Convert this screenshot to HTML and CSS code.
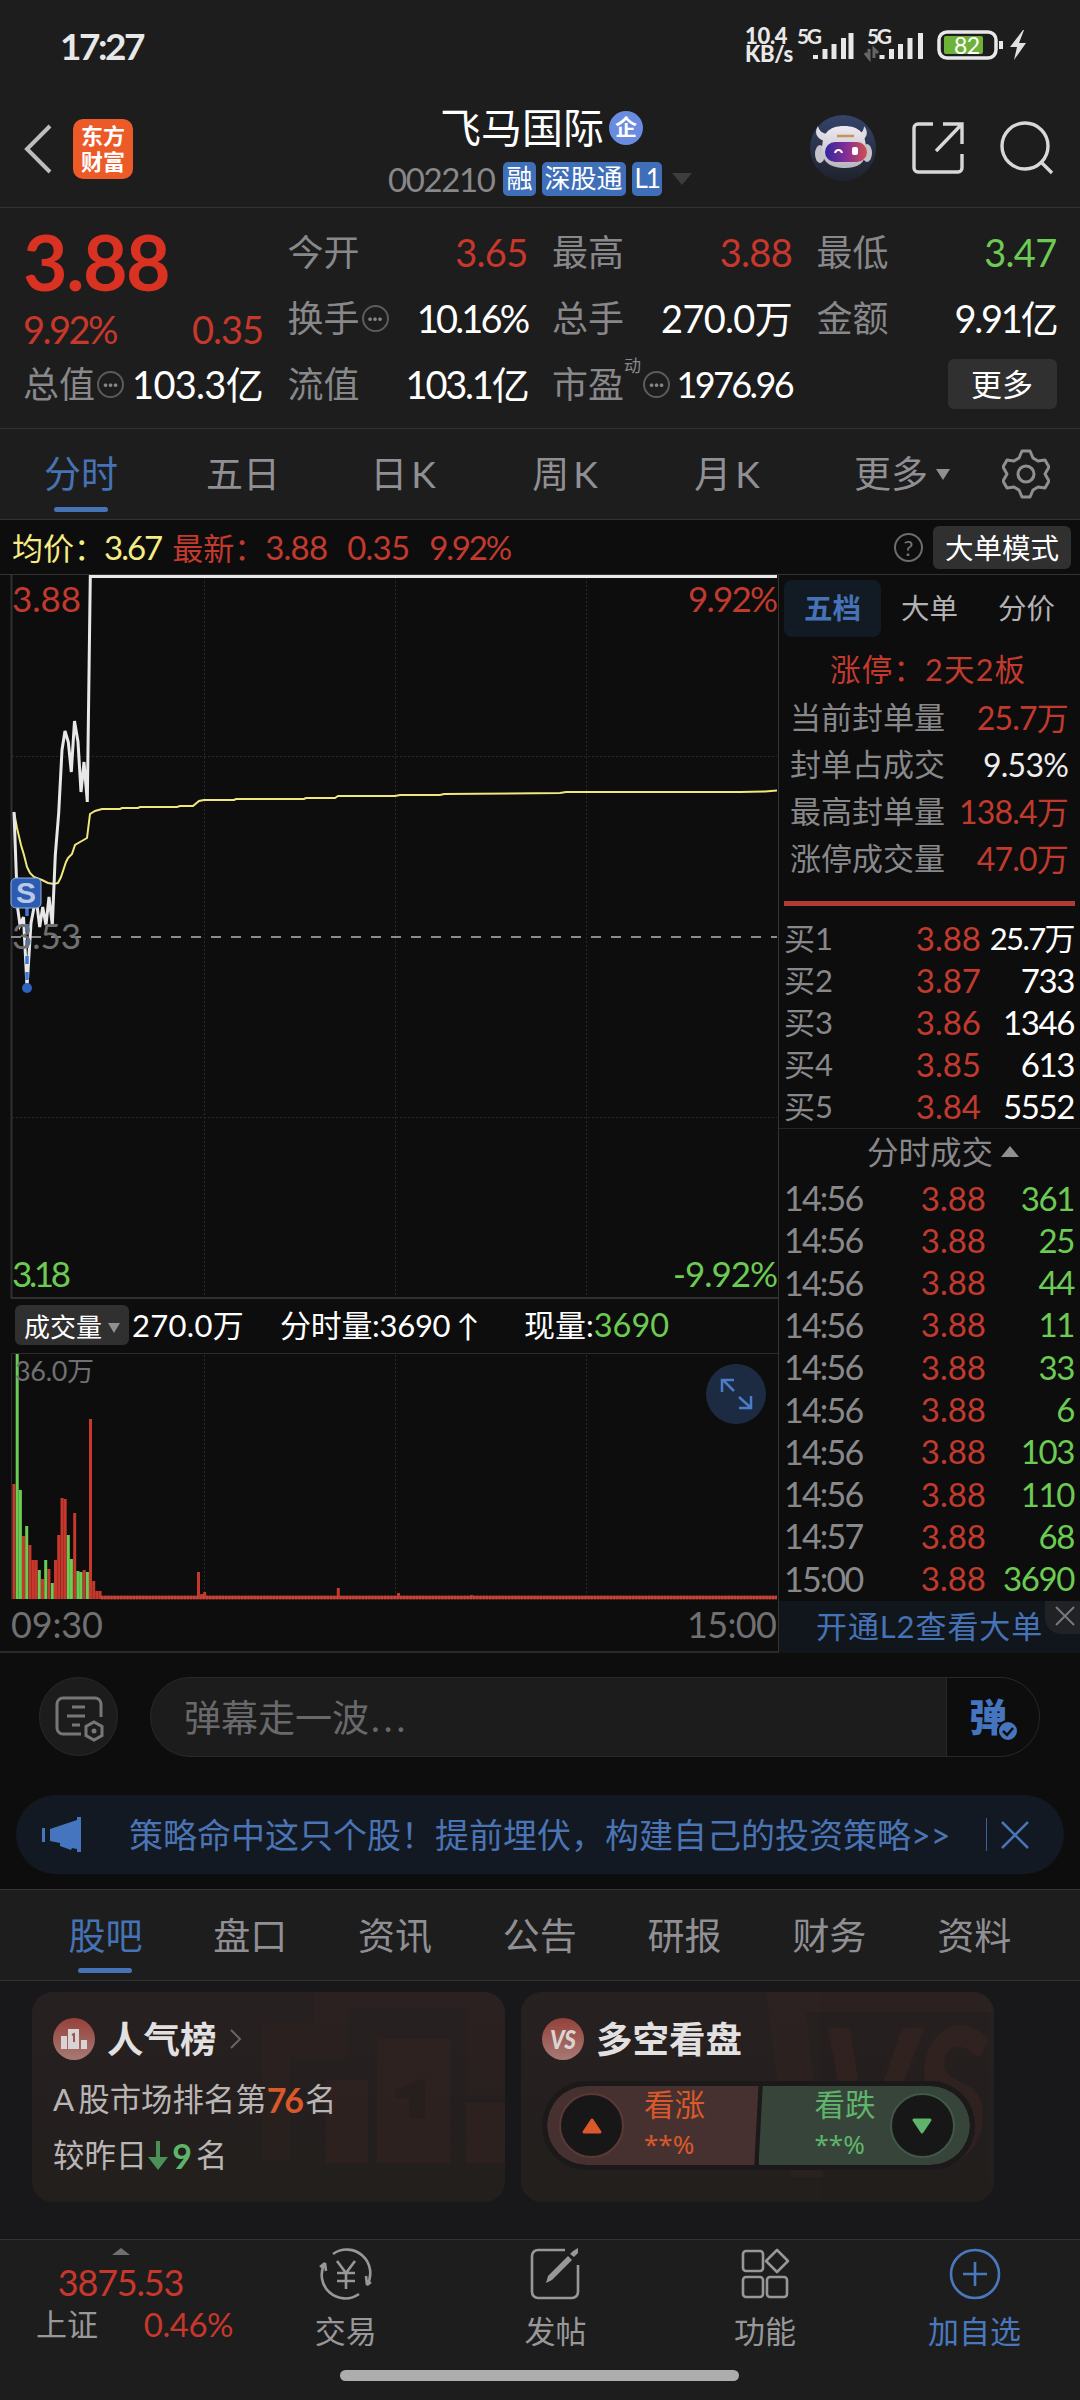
FILE: index.html
```html
<!DOCTYPE html>
<html lang="zh-CN">

<head>
    <meta charset="UTF-8">
    <meta name="viewport" content="width=device-width, initial-scale=1.0">
    <title>飞马国际 002210</title>
    <link rel="stylesheet" href="styles.css">
</head>

<body>
    <div class="status">
        <div class="clock">17:27</div>
        <div class="status-right">
            <div class="speed">10.4<br>KB/s</div>
            <svg class="signals" width="130" height="48" viewBox="0 0 130 48">
                <g class="sig-text"><text x="0" y="22" textLength="25">5G</text><text x="70" y="22" textLength="25">5G</text></g>
                <path class="sig-bars" d="M18.500 37V33M28 37V27M37 37V22M46.500 37V16M54 37V11M85 37V33M94.500 37V27M103.500 37V22M113 37V16M123.500 37V11" />
                <path d="M72 27v9l-4-5M77 36v-9l4 4" fill="none" stroke="#666" stroke-width="3" />
            </svg>
            <svg width="96" height="32" viewBox="0 0 96 32">
                <rect x="2" y="2" width="57" height="26" rx="8" fill="none" stroke="#e8e8e8" stroke-width="3.500" />
                <rect x="7" y="6" width="39" height="18" rx="2" fill="#6db33a" />
                <path d="M64 11v8" stroke="#e8e8e8" stroke-width="4" />
                <text x="17" y="24" class="battery-text" textLength="26">82</text>
                <path d="M86 0L73 17h7l-3 13 12-17h-7l5-13z" fill="#e0e0e0" />
            </svg>
        </div>
    </div>

    <header class="header">
        <div class="header-left">
            <svg width="28" height="50" viewBox="0 0 28 50"><path d="M26 2L3 25l23 23" fill="none" stroke="#bdbdbd" stroke-width="4" /></svg>
            <div class="logo">东方<br>财富</div>
        </div>
        <div class="header-title">
            <div class="name">飞马国际<span class="badge">企</span></div>
            <div class="code"><span class="num">002210</span><span class="tag">融</span><span class="tag">深股通</span><span class="tag level">L1</span><i class="down"></i></div>
        </div>
        <div class="header-right">
            <svg width="66" height="66" viewBox="0 0 66 66">
                <defs>
                    <linearGradient id="sky" x1="0" y1="0" x2="0" y2="1"><stop offset="0" stop-color="#35436a" /><stop offset="1" stop-color="#1f222b" /></linearGradient>
                    <linearGradient id="visor"><stop offset="0" stop-color="#3026a0" /><stop offset=".55" stop-color="#8b3093" /><stop offset="1" stop-color="#d0504c" /></linearGradient>
                    <linearGradient id="shell" x1="0" y1="0" x2="0" y2="1"><stop offset="0" stop-color="#eceaf0" /><stop offset="1" stop-color="#b9b5bd" /></linearGradient>
                </defs>
                <circle cx="33" cy="33" r="33" fill="url(#sky)" />
                <path d="M8 11c-4 6-2 12 6 15l5-7c-6 0-10-3-11-8zM54 11c5 6 3 12-3 15l-5-7c5 0 8-3 8-8z" fill="#dddbe2" />
                <ellipse cx="10" cy="39" rx="5" ry="9" fill="#c5c2c9" /><ellipse cx="57" cy="38" rx="5" ry="9" fill="#c5c2c9" />
                <path d="M12 35c0-16 6-24 22-24s22 8 22 24c0 13-8 18-21 18s-23-5-23-18z" fill="url(#shell)" />
                <rect x="15" y="27" width="42" height="20" rx="10" fill="url(#visor)" />
                <path d="M25 38c1-4 6-4 7 0" fill="none" stroke="#fff" stroke-width="2" /><rect x="42" y="32" width="6" height="8" rx="2" fill="#fff" />
                <path d="M27 21h17" stroke="#c7925f" stroke-width="2.500" />
            </svg>
            <svg width="52" height="52" viewBox="0 0 52 52"><path d="M21 2H6a4 4 0 0 0-4 4v40a4 4 0 0 0 4 4h40a4 4 0 0 0 4-4V32M31 2h19v20M49 3L24 29" fill="none" stroke="#d8d8d8" stroke-width="3.400" /></svg>
            <svg width="54" height="54" viewBox="0 0 54 54"><g fill="none" stroke="#d8d8d8" stroke-width="3.400"><circle cx="25" cy="25" r="23" /><path d="M41 41l11 11" /></g></svg>
        </div>
    </header>

    <section class="quote">
        <div class="col">
            <div class="price up">3.88</div>
            <div class="change up"><span class="tight">9.92%</span><span>0.35</span></div>
            <div class="row"><label>总值<i class="dots">···</i></label><b>103.3亿</b></div>
        </div>
        <div class="col">
            <div class="row"><label>今开</label><b class="up">3.65</b></div>
            <div class="row"><label>换手<i class="dots">···</i></label><b class="tighter">10.16%</b></div>
            <div class="row"><label>流值</label><b class="tight">103.1亿</b></div>
        </div>
        <div class="col">
            <div class="row"><label>最高</label><b class="up">3.88</b></div>
            <div class="row"><label>总手</label><b>270.0万</b></div>
            <div class="row"><label>市盈<sup>动</sup><i class="dots">···</i></label><b class="small">1976.96</b></div>
        </div>
        <div class="col">
            <div class="row"><label>最低</label><b class="down-color">3.47</b></div>
            <div class="row"><label>金额</label><b class="tight">9.91亿</b></div>
            <div class="row"><button class="more">更多</button></div>
        </div>
    </section>

    <nav class="period">
        <span class="active">分时</span><span>五日</span><span class="k">日K</span><span class="k">周K</span><span class="k">月K</span><span class="wide">更多<i class="down"></i></span>
        <svg width="48" height="50" viewBox="0 0 48 50"><g fill="none" stroke="#909094" stroke-width="3"><path d="M20 2h8l3 7 5 3 7-1 4 7-4 7 4 7-4 7-7-1-5 3-3 7h-8l-3-7-5-3-7 1-4-7 4-7-4-7 4-7 7 1 5-3z" stroke-linejoin="round" /><circle cx="24" cy="25" r="8" /></g></svg>
    </nav>

    <div class="legend">
        <span class="avg">均价：<em>3.67</em></span>
        <span class="last">最新：<em>3.88</em><em>0.35</em><em class="tight">9.92%</em></span>
        <i class="help">?</i>
        <button class="mode">大单模式</button>
    </div>

    <main class="main">
        <div class="charts">
            <svg class="chart" width="778" height="725" viewBox="0 574 778 725">
                <path class="solid" d="M11.500 575V1298H778" />
                <path class="dot" d="M204.500 577V1297M395.500 577V1297M586.500 577V1297M12 756.500H777M12 1117.500H777" />
                <path d="M11 937H777" stroke="#8b8b8b" stroke-width="2" stroke-dasharray="10 10" />
                <polyline class="avg-line" points="14,812 17,828 21,845 24,855 27,867 30,873 34,877 42,880 48,883 54,884 58,883 61,877 66,862 68,858 72,854 75,845 80,842 87,838 90,814 95,811 102,809 120,809 122,808 138,808 140,807 177,807 180,806 193,806 199,801 204,800 234,800 236,799 304,799 306,798 335,798 338,796 395,796 400,795 440,795 444,794 560,793 566,792 740,792 765,791.500 777,790.500" />
                <polyline class="price-line" points="14,812 17.500,907 20,925 23.500,917 27,987 31,923 36,897 39.700,927 42.700,907 46,925 49,897 52.300,925 55.300,855 58.700,813 62,750 65,731 68.300,742 71.300,772 74.500,721 78,742 81,792 84,762 87.300,802 90.300,576.500 777,576.500" />
                <path d="M27 908V988" stroke="#3f76dc" stroke-width="3.500" stroke-dasharray="8 8" />
                <circle cx="27" cy="988" r="5" fill="#2e62bd" />
                <rect x="11" y="878" width="30" height="30" rx="5" fill="#2b5cb2" stroke="#92aede" />
                <text x="16" y="903" class="sell">S</text>
                <g class="scale">
                    <text x="12" y="612" fill="#c23a2d">3.88</text>
                    <text x="778" y="612" fill="#c23a2d" text-anchor="end" textLength="90">9.92%</text>
                    <text x="12" y="949" fill="#707072">3.53</text>
                    <text x="12" y="1287" fill="#6ccb52" textLength="59">3.18</text>
                    <text x="778" y="1287" fill="#6ccb52" text-anchor="end" textLength="105">-9.92%</text>
                </g>
            </svg>
            <div class="vol-head">
                <button class="vol-btn">成交量<i class="down"></i></button>
                <span class="v1">270.0万</span>
                <span class="v2">分时量:3690<em>↑</em></span>
                <span class="v3">现量:<em>3690</em></span>
            </div>
            <svg class="volume" width="778" height="298" viewBox="0 1353 778 298">
                <path d="M11.500 1599V1353.500H778" fill="none" stroke="#2c2c2c" />
                <path d="M204.500 1355V1597M395.500 1355V1597M586.500 1355V1597" stroke="#292929" stroke-dasharray="2 2" />
                <path class="bars-up" d="M13.900 1599V1484M23.500 1599V1536M29.900 1599V1545M33.100 1599V1560M36.200 1599V1560M42.500 1599V1579M48.900 1599V1569M55.500 1599V1560M58.700 1599V1535M62 1599V1498M65.200 1599V1499M74.700 1599V1513M84.200 1599V1570M90.500 1599V1419M93.700 1599V1581M96.900 1599V1591M100.100 1599V1591M198.500 1599V1572M201.700 1599V1594M204.700 1599V1592M338.300 1599V1588M398.500 1599V1593M471.600 1599V1595" />
                <path class="bars-down" d="M17.200 1599V1354M20.400 1599V1490M26.700 1599V1526M39.300 1599V1570M45.700 1599V1560M52.300 1599V1583M68.300 1599V1535M71.400 1599V1559M77.900 1599V1571M81 1599V1572M87.400 1599V1572" />
                <path d="M101 1597.500H777" stroke="#a83a30" stroke-width="3.500" />
                <path d="M101 1597.500H777" stroke="#c8453a" stroke-width="3.500" stroke-dasharray="2.200 .98" />
                <g fill="#707072">
                    <text x="15" y="1381" class="vol-max" textLength="79">36.0万</text>
                    <text x="11" y="1638" class="time-label" textLength="92">09:30</text>
                    <text x="687" y="1638" class="time-label" textLength="90">15:00</text>
                </g>
                <circle cx="736" cy="1394" r="30" fill="#1d2b42" />
                <path d="M734 1391l-11-11M722 1392v-12h12M739 1397l11 10M739 1408h12v-12" fill="none" stroke="#4a7cc8" stroke-width="2.500" />
            </svg>
        </div>

        <aside class="side">
            <div class="side-tabs"><span class="on">五档</span><span>大单</span><span>分价</span></div>
            <div class="limit">涨停：2天2板</div>
            <div class="info"><span>当前封单量</span><b class="up">25.7万</b></div>
            <div class="info"><span>封单占成交</span><b>9.53%</b></div>
            <div class="info"><span>最高封单量</span><b class="up">138.4万</b></div>
            <div class="info"><span>涨停成交量</span><b class="up">47.0万</b></div>
            <div class="bid-line"></div>
            <div class="bid"><span>买1</span><b>3.88</b><i class="wan">25.7万</i></div>
            <div class="bid"><span>买2</span><b>3.87</b><i>733</i></div>
            <div class="bid"><span>买3</span><b>3.86</b><i>1346</i></div>
            <div class="bid"><span>买4</span><b>3.85</b><i>613</i></div>
            <div class="bid"><span>买5</span><b>3.84</b><i>5552</i></div>
            <div class="deal-title">分时成交<i class="tri-up"></i></div>
            <div class="bid deal"><span>14:56</span><b>3.88</b><i>361</i></div>
            <div class="bid deal"><span>14:56</span><b>3.88</b><i>25</i></div>
            <div class="bid deal"><span>14:56</span><b>3.88</b><i>44</i></div>
            <div class="bid deal"><span>14:56</span><b>3.88</b><i>11</i></div>
            <div class="bid deal"><span>14:56</span><b>3.88</b><i>33</i></div>
            <div class="bid deal"><span>14:56</span><b>3.88</b><i>6</i></div>
            <div class="bid deal"><span>14:56</span><b>3.88</b><i>103</i></div>
            <div class="bid deal"><span>14:56</span><b>3.88</b><i>110</i></div>
            <div class="bid deal"><span>14:57</span><b>3.88</b><i>68</i></div>
            <div class="bid deal"><span>15:00</span><b>3.88</b><i>3690</i></div>
            <div class="level2">开通L2查看大单
                <span class="l2-close"><svg width="20" height="20" viewBox="0 0 20 20"><path d="M1 1l18 18M19 1L1 19" stroke="#77797e" stroke-width="2" /></svg></span>
            </div>
        </aside>
    </main>

    <div class="danmu">
        <div class="danmu-set">
            <svg width="50" height="46" viewBox="0 0 50 46"><g fill="none" stroke="#77777a" stroke-width="3"><path d="M26 38H8a6 6 0 0 1-6-6V8a6 6 0 0 1 6-6h32a6 6 0 0 1 6 6v13M17 11h13M12 20h18M17 29h8" /><path d="M39 26l8 4.500v9L39 44l-8-4.500v-9z" /></g><circle cx="39" cy="35" r="2.500" fill="#77777a" /></svg>
        </div>
        <div class="danmu-input">
            <span>弹幕走一波<em>...</em></span>
            <div class="danmu-toggle">弹<svg width="22" height="22" viewBox="0 0 22 22"><circle cx="11" cy="11" r="10" fill="#4575be" stroke="#0d0d0d" stroke-width="2" /><path d="M6 11l4 4 6-7" fill="none" stroke="#0d0d0d" stroke-width="2.500" /></svg></div>
        </div>
    </div>

    <div class="notice">
        <svg width="40" height="36" viewBox="0 0 40 36"><path d="M0 11h3v14H0zM8 12L35 3V0h4v35h-4v-3l-5-1-1 2-11-4v-3L8 24z" fill="#4575be" /></svg>
        <span>策略命中这只个股！提前埋伏，构建自己的投资策略&gt;&gt;</span>
        <svg class="notice-close" width="30" height="30" viewBox="0 0 30 30"><path d="M2 2l26 26M28 2L2 28" stroke="#4a74b4" stroke-width="2.500" /></svg>
    </div>

    <nav class="sections">
        <span class="active">股吧</span><span>盘口</span><span>资讯</span><span>公告</span><span>研报</span><span>财务</span><span>资料</span>
    </nav>

    <div class="cards">
        <div class="card">
            <svg class="mark" width="473" height="210" viewBox="0 0 473 210"><path d="M230 168V33h52V0h191v103h-38V15H315v50h-57v103z" fill="#352522" opacity=".3" /><path d="M294 171V88h42v83zM345 171V47h73v124zM434 171v-60h39v60z" fill="#4d2a25" opacity=".22" /><path d="M363 98l30-12v41h-16v-21h-14z" fill="#271f1e" /></svg>
            <div class="card-title">
                <svg width="42" height="42" viewBox="0 0 42 42"><defs><linearGradient id="red" x1="0" y1="0" x2="0" y2="1"><stop offset="0" stop-color="#954139" /><stop offset="1" stop-color="#a77975" /></linearGradient></defs><circle cx="21" cy="21" r="21" fill="url(#red)" /><path d="M8 18h6v13H8zM15 11h11v20H15zM28 22h6v9h-6z" fill="#d9d4d3" /><path d="M19 17l2-1v8" fill="none" stroke="#9b5650" stroke-width="2" /></svg>
                <h3>人气榜</h3>
                <svg class="arrow" width="12" height="20" viewBox="0 0 12 20"><path d="M1 1l9 9-9 9" fill="none" stroke="#6b6665" stroke-width="2" /></svg>
            </div>
            <p><em>A</em>股市场排名第<strong>76</strong>名</p>
            <p class="second">较昨日<svg width="22" height="30" viewBox="0 0 22 30"><path d="M11 0v20" stroke="#4c8f57" stroke-width="4" /><path d="M1 16h20L11 29z" fill="#4c8f57" /></svg><strong class="green">9</strong>名</p>
        </div>
        <div class="card">
            <svg class="mark" width="473" height="210" viewBox="0 0 473 210"><path d="M245 0h228v20H285l18 165h-34z" fill="#352522" opacity=".4" /><text x="300" y="170" class="mark-text" textLength="168" lengthAdjust="spacingAndGlyphs">VS</text></svg>
            <div class="card-title">
                <svg width="42" height="42" viewBox="0 0 42 42"><circle cx="21" cy="21" r="21" fill="url(#red)" /><text x="8" y="31" class="vs" textLength="26" lengthAdjust="spacingAndGlyphs">VS</text></svg>
                <h3>多空看盘</h3>
            </div>
            <div class="vote">
                <div class="bull"><i><svg width="20" height="16" viewBox="0 0 20 16"><path d="M10 2l8 12H2z" fill="#d9592b" stroke="#d9592b" stroke-width="3" stroke-linejoin="round" /></svg></i><span>看涨<br><small>**%</small></span></div>
                <div class="bear"><span>看跌<br><small>**%</small></span><i><svg width="20" height="16" viewBox="0 0 20 16"><path d="M2 2h16l-8 12z" fill="#5fb46b" stroke="#5fb46b" stroke-width="3" stroke-linejoin="round" /></svg></i></div>
            </div>
        </div>
    </div>

    <footer class="bottom">
        <div class="index">
            <i class="tri-up"></i>
            <div class="index-value">3875.53</div>
            <div class="index-row"><span>上证</span><b>0.46%</b></div>
        </div>
        <div class="item">
            <svg width="60" height="54" viewBox="0 0 60 54"><g fill="none" stroke="#98989a" stroke-width="2.600"><path d="M17 7a23.500 23.500 0 0 1 34 31l4-3M51 38l-1-9M43 47A23.500 23.500 0 0 1 9 16l-5 4M9 16l1 8" /><path d="M21 14l9 12 9-12M30 26v16M21 26h18M21 34h18" /></g></svg>
            <span>交易</span>
        </div>
        <div class="item">
            <svg width="50" height="54" viewBox="0 0 50 54"><path d="M35 3H8a6 6 0 0 0-6 6v36a6 6 0 0 0 6 6h34a6 6 0 0 0 6-6V18" fill="none" stroke="#98989a" stroke-width="2.600" /><path d="M43 4l5-3v5l-4 4-4-3zM38 9l4 4-20 20-6 3 2-7z" fill="#98989a" /></svg>
            <span>发帖</span>
        </div>
        <div class="item">
            <svg width="50" height="54" viewBox="0 0 50 54"><g fill="none" stroke="#98989a" stroke-width="2.600"><rect x="3" y="4" width="20" height="20" rx="3" /><rect x="3" y="30" width="20" height="20" rx="3" /><rect x="27" y="30" width="20" height="20" rx="3" /><path d="M37 3l11 11-11 11-11-11z" stroke-linejoin="round" /></g></svg>
            <span>功能</span>
        </div>
        <div class="item blue">
            <svg width="54" height="54" viewBox="0 0 54 54"><g fill="none" stroke="#4a78bd" stroke-width="2.600"><circle cx="27" cy="27" r="24" /><path d="M27 15v24M15 27h24" /></g></svg>
            <span>加自选</span>
        </div>
        <div class="home-bar"></div>
    </footer>
</body>

</html>
```

FILE: styles.css
```css
* {
    box-sizing: border-box;
}

body {
    margin: 0;
    width: 1080px;
    height: 2400px;
    overflow: hidden;
    background-color: #0d0d0d;
    color: #fff;
    font-family: Lato, "Noto Sans CJK SC", sans-serif;
    line-height: 1;
    display: flex;
    flex-direction: column;
}

svg {
    display: block;
    flex: none;
}

i,
em {
    font-style: normal;
}

b {
    font-weight: 400;
}

button {
    border: none;
    padding: 0;
    font-family: inherit;
    color: #fff;
    background-color: #303030;
    border-radius: 6px;
    white-space: nowrap;
}

.up {
    color: #c8372b;
}

.down-color {
    color: #6ccb52;
}

.down {
    display: inline-block;
    border: 7px solid transparent;
    border-top: 11px solid #909094;
    border-bottom: none;
}

.tri-up {
    display: inline-block;
    border: 9px solid transparent;
    border-bottom: 11px solid #909094;
    border-top: none;
}

/* status bar */
.status {
    height: 92px;
    background-color: #1d1d1d;
    display: flex;
    justify-content: space-between;
    align-items: center;
    padding: 0 47px 0 60px;
    color: #e8e8e8;
}

.clock {
    font-size: 37px;
    font-weight: 700;
    letter-spacing: -2.5px;
    padding-bottom: 2px;
}

.status-right {
    display: flex;
    align-items: center;
}

.speed {
    width: 52px;
    font-size: 22px;
    line-height: 18px;
    padding-bottom: 3px;
    font-weight: 900;
    letter-spacing: -0.3px;
}

.signals {
    margin-right: 10px;
}

.sig-text {
    font-size: 21px;
    font-weight: 700;
    fill: #e8e8e8;
}

.sig-bars {
    stroke: #e8e8e8;
    stroke-width: 5;
}

.battery-text {
    font-size: 23px;
    fill: #fff;
}

/* header */
.header {
    height: 116px;
    background-color: #1d1d1d;
    border-bottom: 1px solid #333;
    display: flex;
    justify-content: space-between;
}

.header-left,
.header-right {
    width: 300px;
    display: flex;
    align-items: center;
    padding: 0 0 2px 24px;
}

.header-right {
    padding: 0 26px 3px 0;
    justify-content: flex-end;
}

.header-right svg {
    margin-left: 36px;
}

.logo {
    width: 60px;
    height: 60px;
    margin-left: 21px;
    border-radius: 10px;
    background-color: #ec5a28;
    font-size: 22px;
    line-height: 26px;
    padding-top: 4px;
    text-align: center;
    font-weight: 700;
}

.header-title {
    width: 440px;
    display: flex;
    flex-direction: column;
    align-items: center;
    padding-top: 15px;
}

.name {
    display: flex;
    align-items: center;
    font-size: 41px;
    margin-left: 3px;
}

.badge {
    width: 34px;
    height: 34px;
    margin-left: 5px;
    border-radius: 50%;
    background-color: #6a8ce0;
    font-size: 22px;
    font-weight: 700;
    line-height: 32px;
    text-align: center;
}

.code {
    display: flex;
    align-items: center;
    margin-top: 14px;
    font-size: 33px;
    color: #88888b;
}

.code .num {
    letter-spacing: -1.4px;
    margin-right: 9px;
}

.code .down {
    border-width: 12px 10px 0;
    border-top-color: #3d3d3d;
    margin-left: 4px;
}

.tag {
    height: 34px;
    padding: 0 3px;
    margin-right: 6px;
    border-radius: 5px;
    background-color: #3f6fb8;
    color: #fff;
    font-size: 26px;
    line-height: 33px;
}

.tag.level {
    letter-spacing: -2px;
}

/* quote */
.quote {
    height: 221px;
    background-color: #1d1d1d;
    border-bottom: 1px solid #333;
    display: grid;
    grid-template-columns: repeat(4, 240px);
    column-gap: 24.5px;
    padding: 11px 0 0 23px;
}

.row {
    height: 66px;
    display: flex;
    justify-content: space-between;
    align-items: center;
}

.row label {
    display: flex;
    align-items: center;
    font-size: 36px;
    color: #88888b;
}

.row b {
    font-size: 38px;
    letter-spacing: -0.7px;
    white-space: nowrap;
}

.row b.tight {
    letter-spacing: -2.2px;
}

.row b.tighter {
    letter-spacing: -2.8px;
}

.row b.small {
    font-size: 36px;
    letter-spacing: -2.6px;
}

.row sup {
    font-size: 17px;
    align-self: flex-start;
    margin-top: -9px;
}

.dots {
    width: 27px;
    height: 27px;
    margin-left: 2px;
    border: 2px solid #5c5c5e;
    border-radius: 50%;
    font-size: 18px;
    font-weight: 700;
    line-height: 22px;
    text-align: center;
}

.price {
    height: 90px;
    padding-top: 4px;
    font-size: 77px;
    font-weight: 700;
    letter-spacing: -1.5px;
    color: #da3222;
}

.change {
    height: 42px;
    display: flex;
    justify-content: space-between;
    align-items: center;
    padding-bottom: 3px;
    font-size: 38px;
    letter-spacing: -1px;
}

.change .tight {
    letter-spacing: -2.5px;
}

.more {
    width: 109px;
    height: 50px;
    margin-left: auto;
    font-size: 31px;
    padding-bottom: 3px;
}

/* period tabs */
.period {
    height: 91px;
    background-color: #1d1d1d;
    border-bottom: 1px solid #333;
    display: flex;
    align-items: center;
    font-size: 37px;
    color: #909094;
}

.period span,
.sections span {
    width: 162px;
    height: 90px;
    line-height: 89px;
    text-align: center;
}

.period .k {
    letter-spacing: 4px;
}

.period span.wide {
    width: 191px;
    padding-right: 7px;
}

.wide .down {
    margin-left: 8px;
    vertical-align: 8px;
}

.period .active,
.sections .active {
    color: #4673b5;
}

.period .active::after,
.sections .active::after {
    content: "";
    display: block;
    width: 54px;
    height: 5px;
    margin: -11px auto 0;
    border-radius: 3px;
    background-color: #4673b5;
}

.period svg {
    margin-left: 1px;
}

/* legend */
.legend {
    height: 54px;
    display: flex;
    align-items: center;
    padding: 0 9px 0 12px;
    font-size: 31px;
}

.legend em {
    font-size: 33px;
    margin-right: 20px;
    letter-spacing: -0.8px;
}

.legend em.tight {
    letter-spacing: -2.2px;
}

.avg {
    color: #f5ec84;
}

.legend .avg em {
    margin: 0 11px 0 -1px;
    letter-spacing: -2px;
}

.last {
    color: #c23a2d;
}

.help {
    width: 29px;
    height: 29px;
    margin-left: auto;
    border: 2px solid #6c6c6e;
    border-radius: 50%;
    color: #77777a;
    font-size: 22px;
    line-height: 25px;
    text-align: center;
}

.mode {
    width: 138px;
    height: 43px;
    margin-left: 10px;
    font-size: 28.5px;
    padding-bottom: 2px;
}

/* charts */
.main {
    height: 1079px;
    border-top: 1px solid #333;
    border-bottom: 2px solid #2a2a2a;
    display: flex;
}

.charts {
    width: 778px;
    margin-top: -1px;
}

.solid {
    fill: none;
    stroke: #303030;
    stroke-width: 2;
}

.dot {
    stroke: #292929;
    stroke-dasharray: 2 2;
}

.avg-line {
    fill: none;
    stroke: #f0e77d;
    stroke-width: 2;
}

.price-line {
    fill: none;
    stroke: #e8e8e8;
    stroke-width: 3;
}

.sell {
    font-family: "Liberation Sans", sans-serif;
    font-size: 30px;
    font-weight: 700;
    fill: #b9c8e6;
}

.scale {
    font-size: 35px;
}

.vol-head {
    height: 54px;
    display: flex;
    align-items: center;
    padding: 0 0 2px 15px;
    font-size: 31px;
    white-space: nowrap;
}

.vol-btn {
    width: 114px;
    height: 40px;
    font-size: 26px;
}

.vol-btn .down {
    margin-left: 6px;
    border-width: 10px 6px 0;
    vertical-align: 4px;
}

.v1 {
    width: 148px;
    margin-left: 3px;
    letter-spacing: 0.3px;
}

.v2 {
    width: 244px;
    letter-spacing: -0.3px;
}

.v2 em {
    margin-left: 6px;
}

.v3 em {
    color: #6ccb52;
    font-size: 32.5px;
}

.bars-up {
    stroke: #c8372b;
    stroke-width: 3;
}

.bars-down {
    stroke: #6ccb52;
    stroke-width: 3;
}

.vol-max {
    font-size: 27px;
}

.time-label {
    font-size: 36px;
}

/* order book */
.side {
    width: 302px;
    border-left: 1px solid #333;
    padding-left: 5px;
}

.side-tabs {
    display: flex;
    height: 71px;
    padding-top: 5px;
    font-size: 28.5px;
    color: #b2b2b4;
}

.side-tabs span {
    width: 97px;
    height: 57px;
    line-height: 56px;
    text-align: center;
}

.side-tabs .on {
    background-color: #121a24;
    border-radius: 8px;
    color: #4673b5;
    font-weight: 700;
}

.limit {
    height: 48px;
    line-height: 47px;
    padding-left: 46px;
    color: #c23a2d;
    font-size: 30.5px;
    letter-spacing: 1.2px;
}

.info {
    height: 47px;
    display: flex;
    justify-content: space-between;
    align-items: center;
    padding: 0 12px 0 6px;
    font-size: 31px;
    color: #88888b;
    white-space: nowrap;
}

.info b {
    font-size: 32px;
    letter-spacing: -0.8px;
    color: #eee;
}

.info b.up {
    color: #c23a2d;
}

.bid-line {
    height: 5px;
    width: 291px;
    margin: 19px 0 11px;
    background-color: #b13c36;
}

.bid {
    height: 42.2px;
    display: grid;
    grid-template-columns: 92px 105px 93px;
    align-items: center;
    font-size: 31px;
    color: #88888b;
    white-space: nowrap;
}

.bid b {
    text-align: right;
    font-size: 33px;
    color: #c23a2d;
}

.bid i {
    text-align: right;
    font-size: 33px;
    letter-spacing: -1.4px;
    color: #fff;
}

.bid i.wan {
    font-size: 31px;
    letter-spacing: -1.6px;
}

.deal-title {
    height: 49px;
    margin: 0 0 0 -5px;
    border-top: 1px solid #252525;
    line-height: 46px;
    padding-left: 88px;
    font-size: 31.5px;
    color: #88888b;
}

.deal-title .tri-up {
    margin-left: 8px;
    vertical-align: 7px;
}

.deal {
    height: 42.3px;
    grid-template-columns: 92px 110px 88px;
}

.deal span {
    font-size: 34px;
    letter-spacing: -1.8px;
}

.deal i {
    color: #6ccb52;
}

.level2 {
    position: relative;
    height: 52px;
    margin: 1px 0 0 -5px;
    line-height: 50px;
    padding-left: 37px;
    background-color: #11161d;
    color: #4673b5;
    font-size: 31px;
    letter-spacing: 0.9px;
}

.l2-close {
    position: absolute;
    right: 0;
    top: 0;
    width: 35px;
    height: 33px;
    padding: 5px 0 0 10px;
    border-radius: 0 0 0 16px;
    background-color: #212226;
}

/* danmu */
.danmu {
    display: flex;
    padding: 24px 0 0 39px;
    height: 142px;
}

.danmu-set {
    width: 79px;
    height: 79px;
    padding: 18px 0 0 15px;
    border: 1px solid #292929;
    border-radius: 50%;
    background-color: #1c1c1c;
}

.danmu-input {
    width: 890px;
    height: 80px;
    margin-left: 32px;
    border: 1px solid #292929;
    border-radius: 40px;
    background-color: #1c1c1c;
    display: flex;
    justify-content: space-between;
    align-items: center;
    padding-left: 33px;
    overflow: hidden;
    color: #69696b;
    font-size: 37px;
}

.danmu-input em {
    margin-left: 2px;
    letter-spacing: 4px;
}

.danmu-toggle {
    width: 93px;
    height: 80px;
    padding: 20px 0 0 22px;
    border-left: 1px solid #292929;
    background-color: #0d0d0d;
    color: #4575be;
    font-size: 38px;
    font-weight: 900;
    display: flex;
}

.danmu-toggle svg {
    margin: 23px 0 0 -10px;
}

.notice {
    height: 79px;
    margin: 0 16px 15px;
    border-radius: 40px;
    background-color: #121922;
    display: flex;
    align-items: center;
    padding-left: 26px;
    color: #4a74b4;
    font-size: 34px;
}

.notice span {
    width: 858px;
    margin-left: 47px;
    line-height: 33px;
    border-right: 1px solid #3b5f99;
}

.notice-close {
    margin-left: 13px;
}

/* section tabs */
.sections {
    height: 92px;
    padding-left: 33px;
    border-top: 1px solid #333;
    border-bottom: 1px solid #333;
    background-color: #1d1d1d;
    display: flex;
    font-size: 37px;
    color: #909094;
}

.sections span {
    width: 144.8px;
    line-height: 91px;
}

.sections .active::after {
    margin-top: -13px;
}

/* cards */
.cards {
    height: 258px;
    padding: 11px 0 0 32px;
    display: flex;
    gap: 16px;
    background-color: #18181a;
}

.card {
    position: relative;
    width: 473px;
    height: 210px;
    border-radius: 21px;
    overflow: hidden;
    padding: 26px 21px 0;
    background: linear-gradient(#272020, #221f1d);
}

.card > * {
    position: relative;
}

.card .mark {
    position: absolute;
    left: 0;
    top: 0;
}

.mark-text {
    font-size: 185px;
    font-weight: 900;
    font-style: italic;
    fill: #402622;
    opacity: 0.4;
}

.card-title {
    display: flex;
    align-items: center;
    height: 42px;
}

.card-title h3 {
    margin: 0 0 0 12px;
    font-size: 36.5px;
    font-weight: 700;
    color: #e2e0e0;
}

.arrow {
    margin-left: 13px;
}

.vs {
    font-size: 27px;
    font-weight: 900;
    font-style: italic;
    fill: #d9d4d3;
}

.card p {
    margin: 24px 0 0;
    font-size: 31.4px;
    height: 32px;
    color: #b9b5b4;
    display: flex;
    align-items: center;
}

.card p em {
    margin-right: 4px;
}

.card p strong {
    font-size: 34px;
    letter-spacing: -2px;
    color: #d9592b;
    margin-right: 3px;
}

.card p strong.green {
    color: #5fb46b;
    margin: 0 6px 0 3px;
}

.card p.second {
    margin-top: 24px;
}

.vote {
    width: 433px;
    height: 89px;
    margin: 21px 0 0;
    border: 5px solid #1b1919;
    border-radius: 45px;
    background-color: #1b1919;
    display: flex;
    justify-content: space-between;
    overflow: hidden;
}

.bull,
.bear {
    width: 212px;
    height: 79px;
    display: flex;
    align-items: center;
    background-color: #463130;
    color: #d9592b;
    font-size: 30.5px;
    line-height: 38px;
    border-radius: 40px 0 0 40px;
    clip-path: polygon(0 0, 100% 0, 98% 100%, 0 100%);
}

.bear {
    background-color: #37443a;
    color: #5fb46b;
    border-radius: 0 40px 40px 0;
    clip-path: polygon(2% 0, 100% 0, 100% 100%, 0 100%);
}

.vote i {
    width: 65px;
    height: 65px;
    margin-left: 12px;
    border: 2px solid #5a3936;
    border-radius: 50%;
    background-color: #171718;
    display: flex;
    align-items: center;
    justify-content: center;
}

.vote span {
    margin-left: 20px;
    padding-bottom: 4px;
}

.bear span {
    margin-left: 56px;
}

.bear i {
    margin-left: 14px;
    border-color: #405849;
}

.vote small {
    font-family: "Noto Sans", sans-serif;
    font-size: 26px;
}

/* bottom bar */
.bottom {
    position: relative;
    flex: 1;
    border-top: 1px solid #333;
    background-color: #1d1d1d;
    display: flex;
    color: #98989a;
    font-size: 31px;
}

.index {
    width: 241px;
    text-align: center;
}

.index .tri-up {
    display: block;
    width: 0;
    margin: 8px 0 0 112px;
    border-width: 0 9px 7px;
    border-bottom-color: #707072;
}

.index-value {
    margin-top: 9px;
    font-size: 36px;
    letter-spacing: -1.2px;
    color: #c8372b;
}

.index-row {
    display: flex;
    justify-content: space-between;
    align-items: center;
    padding: 8px 8px 0 36px;
}

.index-row b {
    font-size: 33px;
    letter-spacing: -0.5px;
    color: #c8372b;
}

.item {
    width: 209.6px;
    display: flex;
    flex-direction: column;
    align-items: center;
    padding-top: 7px;
}

.item span {
    margin-top: 15px;
}

.blue {
    color: #4a78bd;
}

.home-bar {
    position: absolute;
    left: 340px;
    top: 130px;
    width: 399px;
    height: 11px;
    border-radius: 6px;
    background-color: #adadad;
}
```
